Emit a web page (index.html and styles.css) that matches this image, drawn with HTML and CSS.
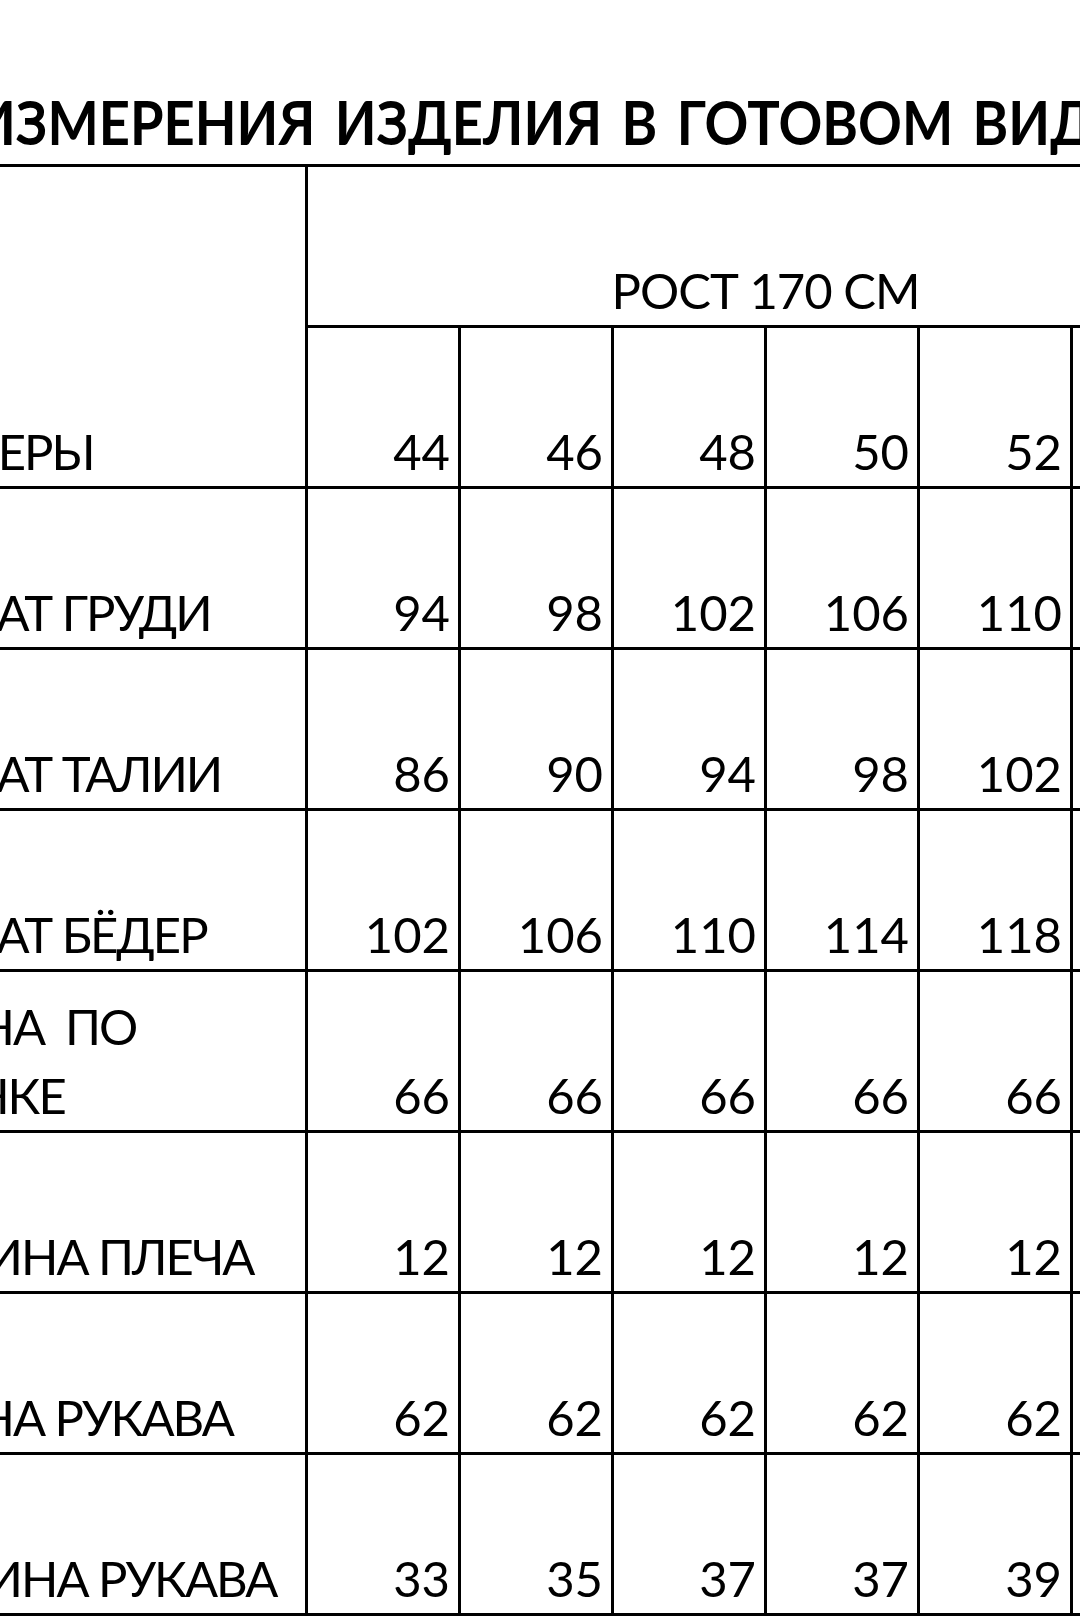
FILE: index.html
```html
<!DOCTYPE html>
<html lang="ru">
<head>
<meta charset="utf-8">
<title>Измерения изделия в готовом виде</title>
<link rel="stylesheet" href="styles.css">
</head>
<body>
<div class="page">
  <h1 class="title"><span class="title-text">ИЗМЕРЕНИЯ ИЗДЕЛИЯ В ГОТОВОМ ВИДЕ</span></h1>
  <div class="grid">
    <div class="cell label head-label">РАЗМЕРЫ</div>
    <div class="cell rost">РОСТ 170 СМ</div>
    <div class="cell num">44</div>
    <div class="cell num">46</div>
    <div class="cell num">48</div>
    <div class="cell num">50</div>
    <div class="cell num">52</div>
    <div class="cell num"></div>

    <div class="cell label">ОБХВАТ ГРУДИ</div>
    <div class="cell num">94</div>
    <div class="cell num">98</div>
    <div class="cell num">102</div>
    <div class="cell num">106</div>
    <div class="cell num">110</div>
    <div class="cell num"></div>

    <div class="cell label">ОБХВАТ ТАЛИИ</div>
    <div class="cell num">86</div>
    <div class="cell num">90</div>
    <div class="cell num">94</div>
    <div class="cell num">98</div>
    <div class="cell num">102</div>
    <div class="cell num"></div>

    <div class="cell label">ОБХВАТ БЁДЕР</div>
    <div class="cell num">102</div>
    <div class="cell num">106</div>
    <div class="cell num">110</div>
    <div class="cell num">114</div>
    <div class="cell num">118</div>
    <div class="cell num"></div>

    <div class="cell label">ДЛИНА&nbsp; ПО<br>СПИНКЕ</div>
    <div class="cell num">66</div>
    <div class="cell num">66</div>
    <div class="cell num">66</div>
    <div class="cell num">66</div>
    <div class="cell num">66</div>
    <div class="cell num"></div>

    <div class="cell label">ШИРИНА ПЛЕЧА</div>
    <div class="cell num">12</div>
    <div class="cell num">12</div>
    <div class="cell num">12</div>
    <div class="cell num">12</div>
    <div class="cell num">12</div>
    <div class="cell num"></div>

    <div class="cell label">ДЛИНА РУКАВА</div>
    <div class="cell num">62</div>
    <div class="cell num">62</div>
    <div class="cell num">62</div>
    <div class="cell num">62</div>
    <div class="cell num">62</div>
    <div class="cell num"></div>

    <div class="cell label">ШИРИНА РУКАВА</div>
    <div class="cell num">33</div>
    <div class="cell num">35</div>
    <div class="cell num">37</div>
    <div class="cell num">37</div>
    <div class="cell num">39</div>
    <div class="cell num"></div>
  </div>
</div>
</body>
</html>
```
FILE: styles.css
```css
html, body {
  margin: 0;
  padding: 0;
  background: #ffffff;
}

body {
  width: 1080px;
  height: 1620px;
  overflow: hidden;
  font-family: "Lato", "Liberation Sans", sans-serif;
  color: #000000;
}

.page {
  width: 1080px;
  overflow: hidden;
}

.title {
  margin: 85px 0 0 -26px;
  font-size: 61px;
  line-height: 73px;
  font-weight: 700;
  white-space: nowrap;
}

.title-text {
  display: inline-block;
  transform: scaleX(0.89);
  transform-origin: left center;
  word-spacing: 7px;
}

.grid {
  margin: 6px 0 0 -140px;
  padding: 3px 0 3px 3px;
  width: max-content;
  background: #000000;
  display: grid;
  grid-template-columns: 442px repeat(6, 150px);
  grid-template-rows: repeat(9, 158px);
  gap: 3px;
}

.cell {
  background: #ffffff;
  display: flex;
  align-items: flex-end;
  font-size: 49px;
  line-height: 69px;
  white-space: nowrap;
}

.label {
  padding-left: 9px;
  letter-spacing: -2px;
}

.head-label {
  grid-row: span 2;
}

.rost {
  grid-column: span 6;
  justify-content: center;
  letter-spacing: -1px;
}

.num {
  justify-content: flex-end;
  padding-right: 8px;
}
```
